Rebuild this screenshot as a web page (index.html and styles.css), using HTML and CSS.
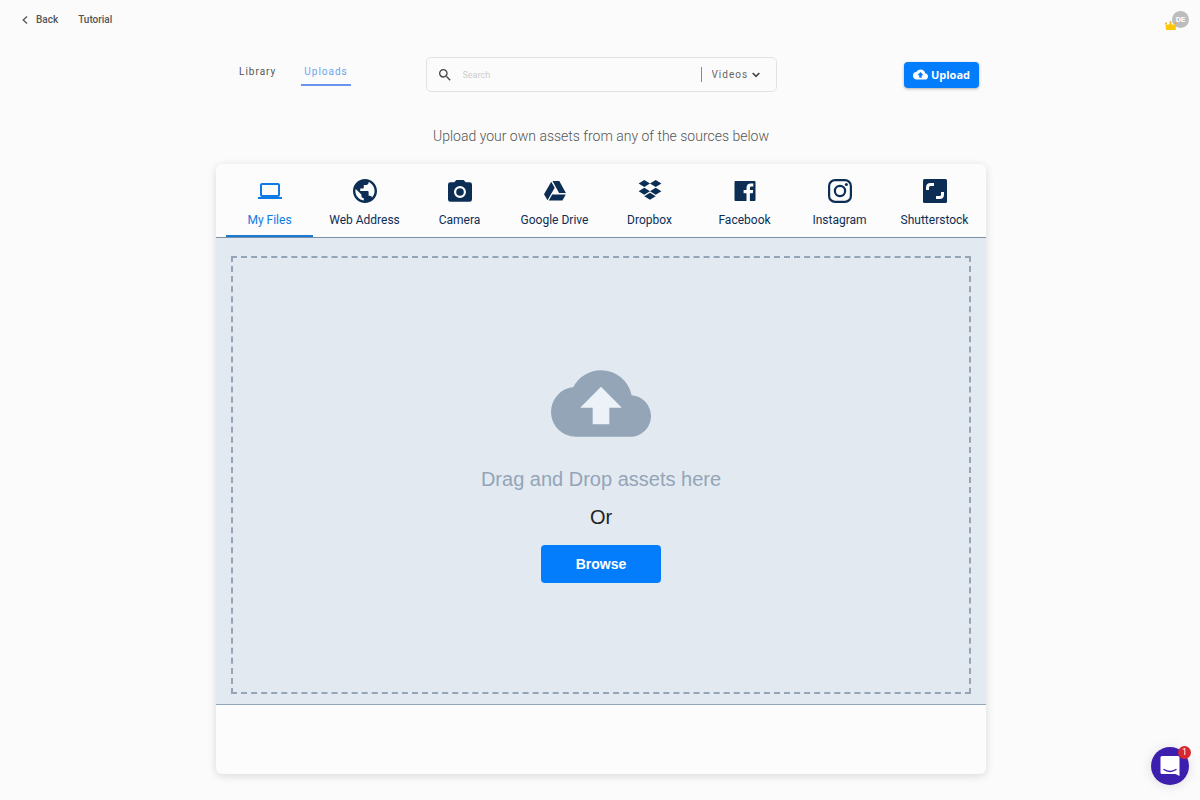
FILE: index.html
```html
<!DOCTYPE html>
<html lang="en">
<head>
    <meta charset="UTF-8">
    <meta name="viewport" content="width=device-width, initial-scale=1.0">
    <title>Uploads</title>
    <link rel="stylesheet" href="styles.css">
</head>
<body>
    <header class="topbar">
        <nav class="topbar-nav">
            <a href="#" class="back">
                <svg width="6" height="8" viewBox="0 0 6 8"><path d="M5 0.5L1.2 4L5 7.5" fill="none" stroke="currentColor" stroke-width="1.3"/></svg>
                Back
            </a>
            <a href="#">Tutorial</a>
        </nav>
        <button class="avatar" aria-label="Account">
            DE
            <svg class="crown" width="12" height="9" viewBox="0 0 12 9"><path d="M1 9L0.5 3L3 4L5.5 1.5L8 4L11 2.5L10.8 9Z" fill="#fdc70c"/><circle cx="1" cy="2.5" r="1" fill="#f5a623"/><circle cx="5.5" cy="1" r="1" fill="#f5a623"/><circle cx="10.8" cy="2" r="1" fill="#f5a623"/></svg>
        </button>
    </header>

    <main class="content">
        <div class="toolbar">
            <nav class="sections">
                <a href="#">Library</a>
                <a href="#" class="active">Uploads</a>
            </nav>
            <form class="search">
                <svg width="16" height="16" viewBox="0 0 24 24"><path fill="#444" d="M15.5 14h-.79l-.28-.27A6.471 6.471 0 0 0 16 9.5 6.5 6.5 0 1 0 9.5 16c1.61 0 3.09-.59 4.23-1.57l.27.28v.79l5 4.99L20.49 19l-4.99-5zm-6 0C7.01 14 5 11.99 5 9.5S7.01 5 9.5 5 14 7.01 14 9.5 11.99 14 9.5 14z"/></svg>
                <input type="text" placeholder="Search" aria-label="Search">
                <div class="type">
                    <select aria-label="Asset type">
                        <option>Videos</option>
                    </select>
                    <svg width="8" height="6" viewBox="0 0 8 6"><path d="M0.7 1L4 4.3L7.3 1" fill="none" stroke="#444" stroke-width="1.7"/></svg>
                </div>
            </form>
            <button class="upload">
                <svg width="15" height="11" viewBox="0 4 24 16"><path fill="#fff" d="M19.35 10.04A7.49 7.49 0 0 0 12 4C9.11 4 6.6 5.64 5.35 8.04A5.994 5.994 0 0 0 0 14c0 3.31 2.69 6 6 6h13c2.76 0 5-2.24 5-5 0-2.64-2.05-4.78-4.65-4.96zM14 13v4h-4v-4H7l5-5 5 5h-3z"/></svg>
                Upload
            </button>
        </div>

        <p class="intro">Upload your own assets from any of the sources below</p>

        <section class="card">
            <div class="sources">
                <button class="source active">
                    <svg viewBox="0 0 24 24"><path d="M20 18c1.1 0 1.99-.9 1.99-2L22 6c0-1.1-.9-2-2-2H4c-1.1 0-2 .9-2 2v10c0 1.1.9 2 2 2H0v2h24v-2h-4zM4 6h16v10H4V6z"/></svg>
                    My Files
                </button>
                <button class="source">
                    <svg viewBox="0 0 24 24"><path d="M12 0C5.4 0 0 5.4 0 12s5.4 12 12 12 12-5.4 12-12S18.6 0 12 0zm-1.2 21.5C6.1 20.9 2.4 16.9 2.4 12c0-.7.1-1.4.3-2.1L8.4 15.6v1.2c0 1.3 1.1 2.4 2.4 2.4v2.3zm8.3-3c-.3-1-1.2-1.7-2.3-1.7h-1.2v-3.6c0-.7-.5-1.2-1.2-1.2H7.2V9.6h2.4c.7 0 1.2-.5 1.2-1.2V6h2.4c1.3 0 2.4-1.1 2.4-2.4v-.5c3.5 1.4 6 4.9 6 8.9 0 2.5-1 4.8-2.5 6.5z"/></svg>
                    Web Address
                </button>
                <button class="source">
                    <svg viewBox="0 0 24 24"><path fill-rule="evenodd" d="M8.4 1L6.2 3.2H2.4A2.4 2.4 0 0 0 0 5.6v14.8a2.4 2.4 0 0 0 2.4 2.4h19.2a2.4 2.4 0 0 0 2.4-2.4V5.6a2.4 2.4 0 0 0-2.4-2.4h-3.8L15.6 1zM12 7a6 6 0 1 1 0 12 6 6 0 0 1 0-12z"/><circle cx="12" cy="13" r="3.8"/></svg>
                    Camera
                </button>
                <button class="source">
                    <svg viewBox="0 0 24 24"><path d="M8.2 2.8L1 15.3l3.5 6 7.2-12.5zM9.5 2h6.8l6.6 12h-6.8zM9.2 15.6h13.6L19.4 21.6H5.8z"/></svg>
                    Google Drive
                </button>
                <button class="source">
                    <svg viewBox="0 0 24 24"><path d="M6.3 1L12 4.5 6.3 8 .6 4.5zM17.7 1l5.7 3.5L17.7 8 12 4.5zM6.3 8.800l5.7 3.5-5.7 3.5-5.7-3.5zM17.7 8.800l5.7 3.5-5.7 3.5-5.7-3.5zM12 13.8l5.7 3.5L12 20.8l-5.7-3.5z"/></svg>
                    Dropbox
                </button>
                <button class="source">
                    <svg viewBox="0 0 24 24"><path d="M2.6 2h18.8c.6 0 1.1.5 1.1 1.1v17.8c0 .6-.5 1.1-1.1 1.1h-4.5v-7.8h2.9l.4-3.2h-3.3V9c0-.9.4-1.5 1.6-1.5h1.8V4.6c-.5-.1-1.4-.2-2.5-.2-2.6 0-4.3 1.5-4.3 4.3V11h-2.900v3.2h2.9V22H2.6c-.6 0-1.1-.5-1.1-1.1V3.1C1.5 2.5 2 2 2.6 2z"/></svg>
                    Facebook
                </button>
                <button class="source">
                    <svg viewBox="0 0 24 24"><rect x="1.1" y="1.1" width="21.8" height="21.8" rx="6" fill="none" stroke="currentColor" stroke-width="2.2"/><circle cx="12" cy="12" r="5.1" fill="none" stroke="currentColor" stroke-width="2.2"/><circle cx="18.4" cy="5.6" r="1.5"/></svg>
                    Instagram
                </button>
                <button class="source">
                    <svg viewBox="0 0 24 24"><rect width="24" height="24" rx="1.5"/><path d="M4.5 11V8.500C4.500 6.500 5.500 5.500 7.500 5.500H11M19.500 13v2.500c0 2-1 3-3 3H13" fill="none" stroke="#fcfcfc" stroke-width="3"/></svg>
                    Shutterstock
                </button>
            </div>
            <div class="drop-area">
                <div class="drop-zone">
                    <svg width="100" height="67" viewBox="0 4 24 16"><path fill="#93a5b7" d="M19.35 10.04A7.49 7.49 0 0 0 12 4C9.11 4 6.6 5.64 5.35 8.04A5.994 5.994 0 0 0 0 14c0 3.31 2.69 6 6 6h13c2.76 0 5-2.24 5-5 0-2.64-2.05-4.78-4.65-4.96z"/><path fill="#edf2f9" d="M14 13v4h-4v-4H7l5-5 5 5h-3z"/></svg>
                    <p class="drag">Drag and Drop assets here</p>
                    <p class="or">Or</p>
                    <button class="browse">Browse</button>
                </div>
            </div>
            <div class="card-footer"></div>
        </section>
    </main>

    <button class="chat" aria-label="Open chat">
        <svg width="20" height="22" viewBox="0 0 20 22"><path d="M2 1h16a1.5 1.5 0 0 1 1.5 1.5V21l-4-2H2a1.5 1.5 0 0 1-1.5-1.5v-15A1.5 1.5 0 0 1 2 1z" fill="#fff"/><path d="M4 14.5c3.5 2.6 8.5 2.6 12 0" fill="none" stroke="#3d1fb0" stroke-width="1.4" stroke-linecap="round"/></svg>
        <span class="badge">1</span>
    </button>
</body>
</html>
```
FILE: styles.css
```css
* {
    box-sizing: border-box;
}

body {
    margin: 0;
    min-height: 100vh;
    background-color: #fbfbfb;
    font-family: Roboto, Arial, sans-serif;
    color: #555;
}

a {
    color: inherit;
    text-decoration: none;
}

button {
    border: 0;
    padding: 0;
    font-family: inherit;
    cursor: pointer;
}

p {
    margin: 0;
}

.topbar {
    display: flex;
    justify-content: space-between;
    align-items: center;
    height: 39px;
    padding: 0 11px 0 22px;
}

.topbar-nav {
    display: flex;
    gap: 20px;
    font-size: 10px;
    font-weight: 500;
}

.back {
    display: flex;
    align-items: center;
    gap: 8px;
}

.avatar {
    position: relative;
    width: 17px;
    height: 17px;
    border-radius: 50%;
    background-color: #bdbdbd;
    color: #fff;
    font-size: 8px;
    font-weight: 700;
}

.crown {
    position: absolute;
    left: -7px;
    bottom: -2px;
}

.content {
    max-width: 772px;
    margin: 0 auto;
    padding-left: 2px;
}

.toolbar {
    display: grid;
    grid-template-columns: 1fr 351px 1fr;
    align-items: center;
    padding-top: 18px;
}

.sections {
    display: flex;
    gap: 22px;
    padding-left: 20px;
    font-size: 10px;
    letter-spacing: 1px;
}

.sections a {
    padding: 1px 3px 5px;
    line-height: 14px;
    border-bottom: 2px solid transparent;
}

.sections .active {
    color: #6ba6ee;
    border-color: #6b93f0;
}

.search {
    display: flex;
    align-items: center;
    height: 35px;
    padding: 0 16px 0 10px;
    border: 1px solid #e2e2e2;
    border-radius: 5px;
}

.search input {
    flex: 1;
    min-width: 0;
    margin-left: 10px;
    padding: 0;
    border: 0;
    background: none;
    font-family: inherit;
    font-size: 9px;
}

.search input::placeholder {
    color: #ccc;
}

.type {
    display: flex;
    align-items: center;
    gap: 3px;
    padding-left: 10px;
    border-left: 1px solid #888;
}

.type select {
    appearance: none;
    padding: 0;
    border: 0;
    background: none;
    font-family: inherit;
    font-size: 10px;
    line-height: 15px;
    letter-spacing: 1px;
    color: #666;
}

.upload {
    display: flex;
    align-items: center;
    justify-content: center;
    gap: 3px;
    justify-self: end;
    width: 75px;
    height: 26px;
    margin-right: 7px;
    border-radius: 4px;
    background-color: #047dfd;
    box-shadow: 0 1px 3px rgba(0, 0, 0, 0.3);
    color: #fff;
    font-family: "Open Sans", sans-serif;
    font-size: 11px;
    font-weight: 700;
}

.intro {
    padding: 34px 0 17px;
    font-size: 14px;
    font-weight: 300;
    line-height: 21px;
    text-align: center;
}

.card {
    border-radius: 6px;
    background-color: #fcfcfc;
    box-shadow: 0 2px 8px rgba(0, 0, 0, 0.14);
}

.sources {
    display: grid;
    grid-template-columns: repeat(8, 1fr);
    gap: 8px;
    padding: 0 8px 0 10px;
    border-bottom: 1px solid #7c90a5;
}

.source {
    display: flex;
    flex-direction: column;
    align-items: center;
    gap: 10px;
    padding: 15px 0 7px;
    border-bottom: 2px solid transparent;
    background: none;
    color: #0c2e55;
    font-size: 12px;
    line-height: 15px;
    white-space: nowrap;
}

.source svg {
    width: 24px;
    height: 24px;
    fill: currentColor;
}

.source.active {
    color: #0f7ae5;
    border-color: #1a7ad4;
}

.drop-area {
    padding: 18px 15px 10px;
    background-color: #e2e9f1;
    border-bottom: 1px solid #93a5b7;
}

.drop-zone {
    display: flex;
    flex-direction: column;
    align-items: center;
    padding: 112px 0 109px;
    border: 2px dashed #93a5b7;
    font-family: "Liberation Sans", Arial, sans-serif;
}

.drag,
.or {
    font-size: 20px;
    line-height: 24px;
}

.drag {
    margin-top: 30px;
    color: #93a5b7;
}

.or {
    margin-top: 14px;
    color: #222;
}

.browse {
    width: 120px;
    height: 38px;
    margin-top: 16px;
    border-radius: 4px;
    background-color: #047dfd;
    color: #fff;
    font-size: 14px;
    font-weight: 700;
}

.card-footer {
    height: 69px;
}

.chat {
    position: fixed;
    right: 11px;
    bottom: 15px;
    display: flex;
    align-items: center;
    justify-content: center;
    width: 38px;
    height: 38px;
    border-radius: 50%;
    background-color: #3d1fb0;
    box-shadow: 0 1px 12px rgba(0, 0, 0, 0.12);
}

.badge {
    position: absolute;
    top: -1px;
    right: -2px;
    width: 13px;
    height: 13px;
    border-radius: 50%;
    background-color: #d8282f;
    color: #fff;
    font-size: 9px;
    line-height: 13px;
    text-align: center;
}
```
